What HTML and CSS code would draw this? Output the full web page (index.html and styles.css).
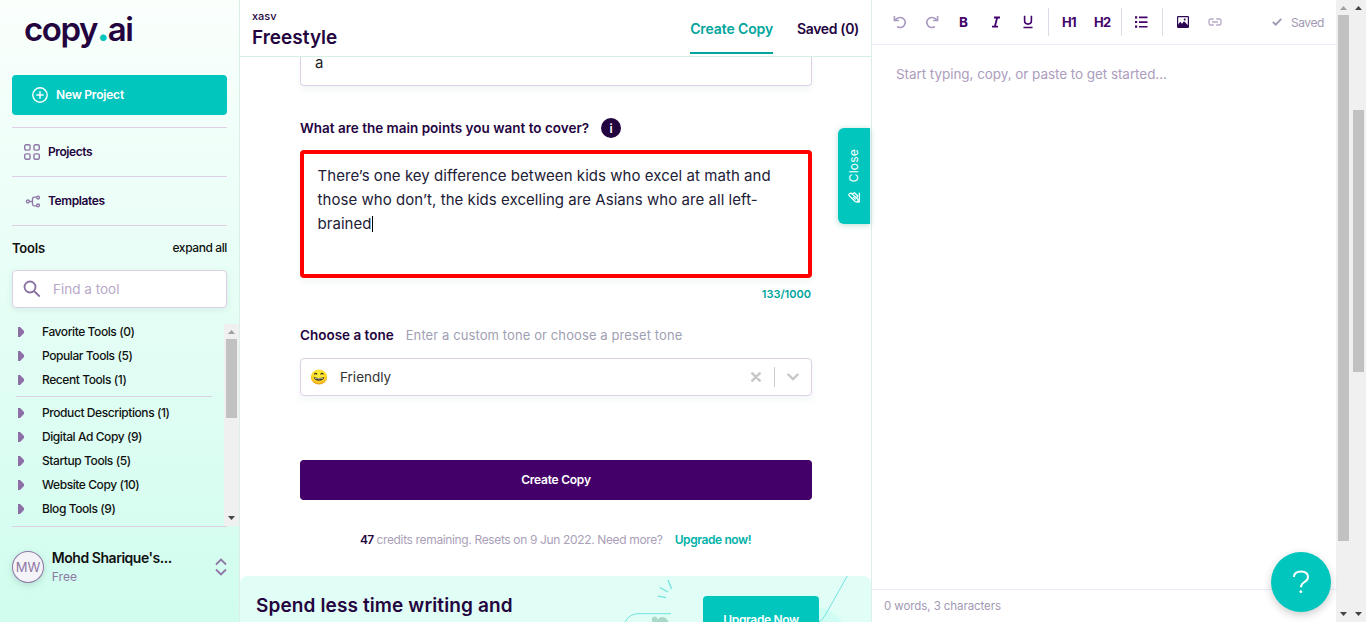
FILE: index.html
```html
<!DOCTYPE html>
<html lang="en">
<head>
<meta charset="utf-8">
<title>copy.ai - Freestyle</title>
<link rel="stylesheet" href="styles.css">
</head>
<body>
<div class="app">
  <aside class="sidebar">
    <div class="logo">copy<span class="logo-dot">.</span>ai</div>
    <button class="new-project">
      <svg width="16" height="16" viewBox="0 0 16 16" fill="none" stroke="#fff" stroke-width="1.4"><circle cx="8" cy="8" r="7.2"/><path d="M8 4.3v7.4M4.3 8h7.4"/></svg>
      <span>New Project</span>
    </button>
    <nav class="nav">
      <a class="nav-item projects"><svg width="16" height="16" viewBox="0 0 16 16" fill="none" stroke="#8e77a5" stroke-width="1.4"><rect x=".7" y=".7" width="5.4" height="5.4" rx="1.5"/><rect x="9.9" y=".7" width="5.4" height="5.4" rx="1.5"/><rect x=".7" y="9.9" width="5.4" height="5.4" rx="1.5"/><rect x="9.9" y="9.9" width="5.4" height="5.4" rx="1.5"/></svg><span>Projects</span></a>
      <a class="nav-item templates"><svg width="16" height="16" viewBox="0 0 16 16" fill="none" stroke="#8e77a5" stroke-width="1.3"><circle cx="3.9" cy="8.5" r="1.5"/><circle cx="14" cy="4.6" r="1.4"/><circle cx="14" cy="12.4" r="1.4"/><path d="M5.4 8.500h3M12.600 4.200H10.200q-1.700 0-1.700 1.700v5.200q0 1.700 1.700 1.700h2.400"/></svg><span>Templates</span></a>
    </nav>
    <div class="tools-head"><b>Tools</b><span>expand all</span></div>
    <div class="search">
      <svg width="18" height="18" viewBox="0 0 18 18" fill="none" stroke="#8870a0" stroke-width="1.800"><circle cx="7" cy="7" r="5.500"/><path d="M11 11l5.700 5.500"/></svg>
      <span>Find a tool</span>
    </div>
    <div class="tools">
      <ul class="tool-list">
        <li><span>Favorite Tools (0)</span></li>
        <li><span>Popular Tools (5)</span></li>
        <li><span>Recent Tools (1)</span></li>
        <li class="rule"></li>
        <li><span>Product Descriptions (1)</span></li>
        <li><span>Digital Ad Copy (9)</span></li>
        <li><span>Startup Tools (5)</span></li>
        <li><span>Website Copy (10)</span></li>
        <li><span>Blog Tools (9)</span></li>
      </ul>
      <div class="scrollbar tool-scroll"><i class="up dim"></i><div class="thumb"></div><i class="down"></i></div>
    </div>
    <div class="profile">
      <div class="avatar">MW</div>
      <div class="who"><b>Mohd Sharique's...</b><span>Free</span></div>
      <svg width="12" height="18" viewBox="0 0 12 18" fill="none" stroke="#8e77a5" stroke-width="1.800"><path d="M1 6.500l5-5 5 5M1 11.500l5 5 5-5"/></svg>
    </div>
  </aside>

  <main class="main">
    <header class="header">
      <div class="titles"><span class="crumb">xasv</span><h1>Freestyle</h1></div>
      <div class="tabs"><a class="tab active"><span>Create Copy</span></a><a class="tab"><span>Saved (0)</span></a></div>
    </header>
    <div class="form">
      <div class="name-input">a</div>
      <div class="label points"><span>What are the main points you want to cover?</span><i class="info">i</i></div>
      <div class="textarea"><span>There’s one key difference between kids who excel at math and</span><br><span>those who don’t, the kids excelling are Asians who are all left-</span><br><span>brained</span><i class="caret"></i></div>
      <div class="counter">133/1000</div>
      <div class="label tone"><span>Choose a tone</span><em>Enter a custom tone or choose a preset tone</em></div>
      <div class="select">
        <svg class="emoji" width="18" height="18" viewBox="0 0 18 18"><defs><radialGradient id="face" cx=".5" cy=".35" r=".65"><stop offset="0" stop-color="#fff23c"/><stop offset=".65" stop-color="#fddc28"/><stop offset="1" stop-color="#ed9818"/></radialGradient></defs><ellipse cx="9" cy="9" rx="8.200" ry="7.600" fill="url(#face)"/><path d="M4.200 6.500q1.500-2.200 3 0M10.500 6.500q1.500-2.200 3 0" fill="none" stroke="#453321" stroke-width="1.100"/><path d="M3.600 9q5.400 2.200 10.800 0-.8 3.800-5.400 3.800T3.600 9z" fill="#453321"/><path d="M4.600 9.900q4.400 1.400 8.800 0l-.6 .9q-3.800 .8-7.600 0z" fill="#fff"/></svg>
        <span class="value">Friendly</span>
        <svg class="clear" width="10" height="10" viewBox="0 0 10 10" stroke="#c8c8c8" stroke-width="2.500" stroke-linecap="round"><path d="M1.300 1.300l7.400 7.400M8.700 1.300L1.300 8.700"/></svg>
        <i class="sep"></i>
        <svg class="chev" width="12" height="8" viewBox="0 0 12 8" fill="none" stroke="#c8c8c8" stroke-width="2.400" stroke-linecap="round"><path d="M1.400 1.600L6 6l4.600-4.400"/></svg>
      </div>
      <button class="create"><span>Create Copy</span></button>
      <div class="credits"><b>47</b><span class="credit-text">credits remaining. Resets on 9 Jun 2022. Need more?</span><a>Upgrade now!</a></div>
      <section class="banner">
        <svg class="art" width="631" height="46" viewBox="0 0 631 46" fill="none" stroke="#72e3de"><circle cx="575" cy="63" r="32" fill="#cffdf3" stroke="none"/><g stroke-width="1.300"><path d="M428 4l3.600 9M419.700 11.500l8.500 4.500M417.700 20.100l8.300 1.600"/></g><g stroke="#aad8c8" fill="#aad8c8"><circle cx="414.700" cy="43.500" r="2.500"/><circle cx="422.500" cy="47" r="5.500"/><path d="M413 45h12v2h-12z"/></g><path d="M385 46Q389 37.700 399 37.700h32M607.300 0L585 39.500Q582 45 578 46"/></svg>
        <h2>Spend less time writing and</h2>
        <button class="upgrade"><span>Upgrade Now</span></button>
      </section>
    </div>
    <div class="close-tab">
      <span>Close</span>
      <svg width="12" height="11" viewBox="0 0 12 11" fill="none" stroke="#fff" stroke-width="1.200"><path d="M.8 3.200Q1 1 3.200 1.200L9.800 7l.3 2.800-2.800-.2L.8 3.200zM5 5l2.600 2.500M4.500 1.800L6.500 .8l3 3-.6 2.300M11.300 .8v9.500M8 10.200h3.400"/></svg>
    </div>
  </main>

  <section class="editor">
    <div class="toolbar">
      <svg width="14" height="14" viewBox="0 0 14 14" fill="none" stroke="#ab9abd" stroke-width="1.600"><path d="M1.400 1v4.500h4.500M2 5.200Q4 2.500 7.200 2.500a5 5 0 1 1-3 9"/></svg>
      <svg width="14" height="14" viewBox="0 0 14 14" fill="none" stroke="#ab9abd" stroke-width="1.600"><path d="M12.600 1v4.500H8.100M12 5.200Q10 2.500 6.800 2.500a5 5 0 1 0 3 9"/></svg>
      <b class="tb-b">B</b>
      <svg width="10" height="12" viewBox="0 0 10 12" fill="none" stroke="#43036a" stroke-width="1.800"><path d="M3 1.500h6M1 10.700h6M6.200 1.500L3.800 10.700"/></svg>
      <svg width="12" height="14" viewBox="0 0 12 14" fill="none" stroke="#43036a" stroke-width="1.600"><path d="M2.600 .8v4.800q0 3.500 3.400 3.500t3.400-3.500V.8M1.500 12.500h9"/></svg>
      <i class="bar"></i>
      <b class="tb-h">H1</b>
      <b class="tb-h">H2</b>
      <i class="bar list-bar"></i>
      <svg width="13" height="12" viewBox="0 0 13 12" fill="#43036a"><path d="M0 .2h2.200v2.200H0zM0 4.900h2.200v2.200H0zM0 9.600h2.200v2.200H0zM4 .5h8.500v1.700H4zM4 5.200h8.500v1.700H4zM4 9.900h8.500v1.700H4z"/></svg>
      <i class="bar image-bar"></i>
      <svg width="12" height="12" viewBox="0 0 12 12"><rect x=".6" y=".6" width="10.800" height="10.800" rx=".6" fill="none" stroke="#2c0752" stroke-width="1.200"/><path d="M1 11V8.700l2.200-2.900 1.800 2 2-2.500 4 3.900V11z" fill="#2c0752"/><circle cx="7.700" cy="3.600" r="1" fill="#2c0752"/></svg>
      <svg class="link" width="14" height="8" viewBox="0 0 14 8" fill="none" stroke="#b9abc9" stroke-width="1.300"><path d="M5.800 1H3a2 2 0 0 0-2 2v2a2 2 0 0 0 2 2h2.800M8.200 1H11a2 2 0 0 1 2 2v2a2 2 0 0 1-2 2H8.200M4 4h6"/></svg>
      <span class="saved"><svg width="10" height="8" viewBox="0 0 10 8" fill="none" stroke="#a299b3" stroke-width="1.900"><path d="M.8 3.900L3.700 6.600 9.300 .9"/></svg><span>Saved</span></span>
    </div>
    <div class="placeholder">Start typing, copy, or paste to get started...</div>
    <footer class="stats">0 words, 3 characters</footer>
    <div class="help"><svg width="18" height="24" viewBox="0 0 18 24" fill="none" stroke="#fff" stroke-width="2"><path d="M2 7Q2 1.500 9 1.500T16 7q0 3-3.500 5T9 17.200"/><circle cx="8.800" cy="21.700" r="1" fill="#fff" stroke-width="1"/></svg></div>
  </section>
  <div class="scrollbar inner"><i class="up dim"></i><div class="thumb"></div><i class="down"></i></div>
  <div class="scrollbar outer"><i class="up"></i><div class="thumb"></div><i class="down"></i></div>
</div>
</body>
</html>
```

FILE: styles.css
```css
* { box-sizing: border-box; }
body { margin: 0; font-family: Inter, "Liberation Sans", sans-serif; color: #24043f; overflow: hidden; }
button { border: 0; padding: 0; font: inherit; }
h1, h2, ul { margin: 0; padding: 0; list-style: none; }
i, em { font-style: normal; }
svg { display: block; flex: none; }
span { white-space: nowrap; }
.app { display: flex; width: 1366px; height: 622px; background: #fff; overflow: hidden; }

.sidebar { width: 240px; flex: none; padding-left: 12px; border-right: 1px solid #dceee8; background: linear-gradient(#fafffc, #d0fdee); display: flex; flex-direction: column; }
.logo { height: 75px; padding: 9px 0 0 12px; font: 600 33px/40px Inter, sans-serif; letter-spacing: -1.450px; color: #24043f; }
.logo-dot { color: #00c5bd; font-weight: 900; }
.new-project { width: 215px; height: 40px; border-radius: 4px; background: #00c6be; color: #fff; display: flex; align-items: center; gap: 8px; padding-left: 20px; font-size: 12px; font-weight: 600; letter-spacing: -.2px; flex: none; }
.new-project span, .nav-item span, .create span, .upgrade span, .tool-list span { padding-bottom: 2px; }
.nav { margin-top: 12px; width: 215px; }
.nav-item { height: 49px; border-top: 1px solid #dccfe6; display: flex; align-items: center; gap: 8px; padding-left: 12px; font-size: 12px; font-weight: 600; letter-spacing: -.4px; }
.tools-head { width: 215px; height: 45px; padding-bottom: 1px; border-top: 1px solid #dccfe6; display: flex; align-items: center; justify-content: space-between; font-size: 12px; font-weight: 500; letter-spacing: -.4px; color: #111; }
.tools-head b { font-size: 13px; font-weight: 600; letter-spacing: -.2px; }
.search { width: 215px; height: 38px; border: 1px solid #dccfe6; border-radius: 4px; background: #fff; display: flex; align-items: center; padding-left: 10px; gap: 12px; font-size: 13.500px; color: #b9a8c8; box-shadow: 0 2px 6px #b8ddd466; }
.search span { padding-bottom: 1px; }
.tools { height: 202px; margin-top: 16px; display: flex; justify-content: space-between; }
.tool-list { margin-top: -4px; width: 212px; color: #111; }
.tool-list li { height: 24px; display: flex; align-items: center; font-size: 12px; font-weight: 500; letter-spacing: -.42px; }
.tool-list li::before { content: ""; width: 6px; height: 10px; margin: 0 18px 0 6px; background: #8e6fa5; clip-path: polygon(0 0, 35% 0, 100% 40%, 100% 60%, 35% 100%, 0 100%); }
.tool-list .rule { height: 1px; margin: 4px 12px 4px 4px; background: #dccfe6; width: 196px; }
.tool-list .rule::before { display: none; }
.profile { width: 215px; height: 80px; border-top: 1px solid #dccfe6; display: flex; align-items: center; }
.avatar { width: 32px; height: 32px; border: 1px solid #8e77a5; border-radius: 50%; background: #f4f4f8; color: #8e77a5; font-size: 13px; display: grid; place-items: center; box-shadow: 0 2px 6px #9cc8bc99; }
.who { display: flex; flex-direction: column; margin-left: 8px; width: 157px; font-size: 12px; line-height: 18px; color: #8e77a5; }
.who b { font-size: 14px; font-weight: 600; letter-spacing: -.46px; color: #111; }
.who span { padding-top: 1px; margin-bottom: -1px; }
.profile > svg { margin-left: 7px; }

.scrollbar { width: 15px; flex: none; background: #f0f0f0; display: flex; flex-direction: column; align-items: center; }
.scrollbar i { width: 7px; height: 4px; flex: none; background: #444; }
.scrollbar .up { clip-path: polygon(50% 0, 100% 100%, 0 100%); margin: 6px 0 5px; }
.scrollbar .up.dim { background: #a0a0a0; }
.scrollbar .down { clip-path: polygon(0 0, 100% 0, 50% 100%); margin: auto 0 6px; }
.thumb { width: 11px; background: #c1c1c1; }
.tool-scroll .thumb { height: 79px; }
.inner .thumb { height: 526px; }
.outer .thumb { height: 262px; margin-top: 95px; }

.main { width: 632px; flex: none; position: relative; border-right: 1px solid #dceee8; display: flex; flex-direction: column; }
.header { height: 57px; flex: none; border-bottom: 1px solid #d4efe0; display: flex; justify-content: space-between; padding: 8px 12px 2px; }
.titles { display: flex; flex-direction: column; }
.crumb { font-size: 11px; line-height: 16px; font-weight: 500; }
h1 { font-size: 19px; line-height: 28px; font-weight: 600; }
.tabs { display: flex; gap: 24px; font-size: 14px; font-weight: 600; }
.tab { height: 46px; padding-top: 12px; line-height: 18px; letter-spacing: -.35px; }
.tab.active { color: #00a59c; border-bottom: 2px solid #00a59c; letter-spacing: -.12px; }
.form { height: 565px; overflow: hidden; padding-left: 60px; display: flex; flex-direction: column; }
.name-input { width: 512px; height: 29px; flex: none; border: 1px solid #dccfe6; border-top: 0; border-radius: 0 0 4px 4px; padding-left: 14px; font-size: 15px; line-height: 12px; color: #222; box-shadow: 0 4px 6px #e8f4f099; }
.label { display: flex; align-items: center; height: 24px; flex: none; font-size: 13.500px; font-weight: 600; }
.label > span { padding-bottom: 1px; }
.points { margin-top: 30px; gap: 12px; }
.info { width: 20px; height: 20px; border-radius: 50%; background: #24043f; color: #fff; display: grid; place-items: center; font-size: 12px; }
.textarea { width: 512px; height: 128px; flex: none; margin-top: 10px; border: 4px solid #f00; border-radius: 4px; padding: 10px 13.500px; font-size: 15px; line-height: 24px; letter-spacing: .05px; color: #222036; box-shadow: 0 4px 6px #e8f4f099; }
.caret { display: inline-block; width: 1px; height: 16px; background: #000; vertical-align: -3px; }
.counter { width: 511px; height: 16px; margin-top: 8px; text-align: right; font-size: 11px; line-height: 16px; font-weight: 600; color: #00a59c; }
.tone { margin-top: 21px; gap: 12px; }
.tone em { font-size: 13px; letter-spacing: .1px; color: #a0a0b4; font-weight: 400; white-space: nowrap; }
.select { width: 512px; height: 38px; flex: none; margin-top: 11px; border: 1px solid #dccfe6; border-radius: 4px; display: flex; align-items: center; padding: 0 12px 0 9px; font-size: 13.500px; color: #333; box-shadow: 0 4px 6px #e8f4f099; }
.value { margin-left: 12px; padding-bottom: 1px; }
.clear { margin-left: auto; }
.sep { width: 1px; height: 20px; background: #ccc; margin: 0 12px 0 13px; }
.create { width: 512px; height: 40px; flex: none; margin-top: 64px; border-radius: 4px; background: #430068; color: #fff; font-size: 12px; font-weight: 600; letter-spacing: -.25px; }
.create span, .upgrade span { display: block; }
.credits { display: flex; align-items: center; height: 20px; flex: none; margin: 29px 0 0 60px; font-size: 12px; color: #aa9fb8; }
.credits b { color: #24043f; font-weight: 600; letter-spacing: -.7px; }
.credit-text { margin-left: 3px; letter-spacing: -.355px; }
.credits a { margin-left: 12px; color: #00b1a9; font-weight: 600; letter-spacing: -.4px; white-space: nowrap; }
.banner { position: relative; width: 631px; height: 46px; flex: none; margin: 27px 0 0 -60px; padding: 0 52px 0 16px; border-radius: 8px 8px 0 0; background: #e0fef6; overflow: hidden; display: flex; justify-content: space-between; }
.art { position: absolute; inset: 0; }
h2 { font-size: 19px; line-height: 24px; margin-top: 18px; font-weight: 600; letter-spacing: .12px; white-space: nowrap; }
.upgrade { position: relative; width: 116px; height: 48px; flex: none; margin-top: 20px; border-radius: 4px; background: #00c6be; color: #fff; font-size: 12px; font-weight: 600; letter-spacing: -.35px; }
.close-tab { position: absolute; right: 1px; top: 128px; width: 32px; height: 96px; border-radius: 6px 0 0 6px; background: #00c6be; color: #fff; display: flex; flex-direction: column; align-items: center; justify-content: center; gap: 9px; font-size: 12px; letter-spacing: .2px; box-shadow: 0 1px 6px #b8ddd4; }
.close-tab span { writing-mode: vertical-rl; transform: rotate(180deg); margin-right: 2px; }

.editor { width: 464px; flex: none; position: relative; display: flex; flex-direction: column; }
.toolbar { height: 45px; border-bottom: 1px solid #efeafb; display: flex; align-items: center; padding: 0 12px 0 21px; color: #43036a; }
.toolbar > * { flex: none; }
.toolbar > svg + svg { margin-left: 18px; }
.tb-b { font-size: 13.500px; font-weight: 700; width: 10px; margin: 0 22px 0 20px; line-height: 16px; }
.toolbar > .tb-b + svg + svg { margin-left: 21px; }
.tb-h { font-size: 13px; font-weight: 700; width: 16px; letter-spacing: -.6px; }
.tb-h + .tb-h { margin-left: 16px; }
.bar { width: 1px; height: 28px; background: #dedbe6; margin: 0 13px 0 14px; }
.bar.list-bar { margin-left: 11px; }
.bar.image-bar { margin-right: 14px; }
.toolbar > svg + svg.link { margin-left: 19px; }
.saved { margin-left: auto; display: flex; align-items: center; gap: 9px; font-size: 12px; letter-spacing: -.4px; color: #a299b3; }
.placeholder { flex: 1; padding: 20px 24px; font-size: 13.500px; line-height: 19px; letter-spacing: -.06px; color: #ac9cbd; white-space: nowrap; }
.stats { height: 33px; border-top: 1px solid #efeafb; padding-left: 12px; font-size: 11.500px; line-height: 32px; letter-spacing: -.08px; color: #a299b3; }
.help { position: absolute; left: 399px; top: 552px; width: 60px; height: 60px; border-radius: 50%; background: #00c6be; display: grid; place-items: center; box-shadow: 0 3px 8px #0003; }
```
